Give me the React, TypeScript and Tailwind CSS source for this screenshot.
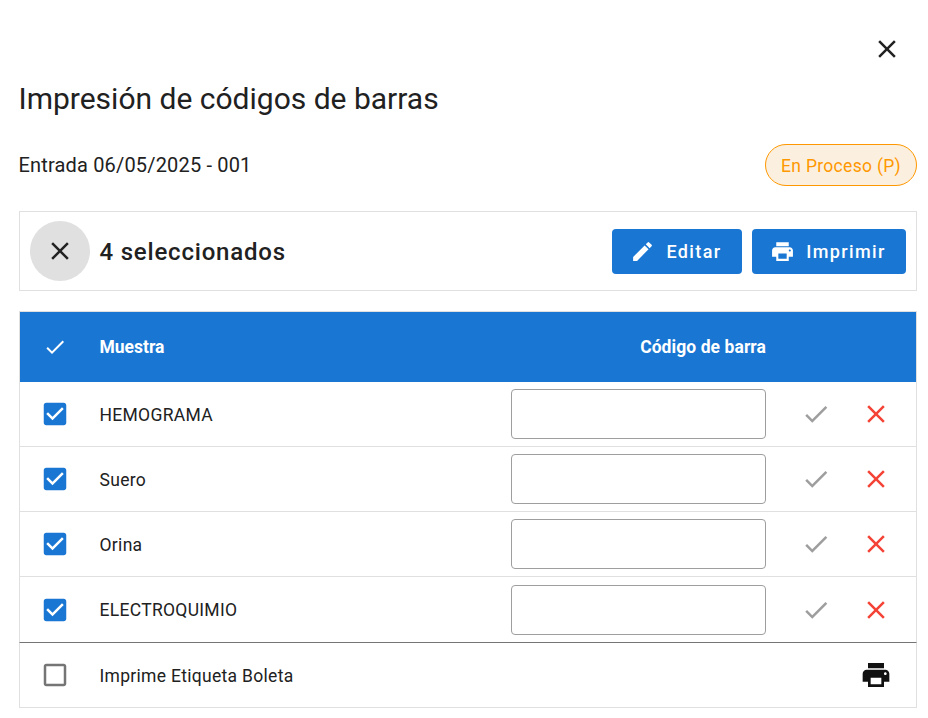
const paths = {
  close: "M19 6.41 17.59 5 12 10.59 6.41 5 5 6.41 10.59 12 5 17.59 6.41 19 12 13.41 17.59 19 19 17.59 13.41 12z",
  check: "M9 16.17 4.83 12l-1.42 1.41L9 19 21 7l-1.41-1.41z",
  edit: "M3 17.25V21h3.75L17.81 9.94l-3.75-3.75L3 17.25zM20.71 7.04a.996.996 0 0 0 0-1.41l-2.34-2.34a.996.996 0 0 0-1.41 0l-1.83 1.83 3.75 3.75 1.83-1.83z",
  print: "M19 8H5c-1.66 0-3 1.34-3 3v6h4v4h12v-4h4v-6c0-1.66-1.34-3-3-3zm-3 11H8v-5h8v5zm3-7c-.55 0-1-.45-1-1s.45-1 1-1 1 .45 1 1-.45 1-1 1zm-1-9H6v4h12V3z",
  checked: "M19 3H5c-1.11 0-2 .9-2 2v14c0 1.1.89 2 2 2h14c1.11 0 2-.9 2-2V5c0-1.1-.89-2-2-2zm-9 14l-5-5 1.41-1.41L10 14.17l7.59-7.59L19 8l-9 9z",
  unchecked: "M19 5v14H5V5h14m0-2H5c-1.1 0-2 .9-2 2v14c0 1.1.9 2 2 2h14c1.1 0 2-.9 2-2V5c0-1.1-.9-2-2-2z",
};

const Icon = ({ d, className }: { d: string; className: string }) => (
  <svg viewBox="0 0 24 24" fill="currentColor" className={className}>
    <path d={d} />
  </svg>
);

const samples = ["HEMOGRAMA", "Suero", "Orina", "ELECTROQUIMIO"];

const App = () => {
  return (
    <div className="h-[718px] w-[928px] overflow-hidden bg-white pt-[29px] pr-[11px] pl-[19px] font-['Roboto',sans-serif] text-[#212121]">
      <div className="flex h-[40px] justify-end pr-[10px]">
        <button className="flex h-[40px] w-[40px] items-center justify-center">
          <Icon d={paths.close} className="h-[30px] w-[30px] shrink-0" />
        </button>
      </div>

      <h1 className="mt-[10px] -ml-[0.5px] h-[40px] text-[30px] leading-[40px] font-normal">Impresión de códigos de barras</h1>

      <div className="mt-[25px] flex h-[42px] items-center justify-between">
        <span className="-ml-[0.5px] text-[20px] tracking-[0.17px]">Entrada 06/05/2025 - 001</span>
        <span className="flex h-[42px] w-[152px] items-center justify-center rounded-[21px] border border-[#ff9800] bg-[#fbf0e0] pt-[2px] text-[17.5px] tracking-[0.3px] text-[#ff9800]">
          En Proceso (P)
        </span>
      </div>

      <div className="mt-[25px] flex h-[80px] items-center border border-[#e0e0e0] px-[10px]">
        <button className="flex h-[60px] w-[60px] items-center justify-center rounded-full bg-[#e0e0e0] pr-px">
          <Icon d={paths.close} className="h-[30px] w-[30px] shrink-0" />
        </button>
        <span className="ml-[9.5px] flex-1 pt-[2px] text-[24px] font-medium tracking-[0.8px]">4 seleccionados</span>
        <button className="flex h-[45px] w-[130px] items-center justify-center gap-[11px] rounded-[4px] bg-[#1976d2] pr-[2px] text-[18px] font-medium tracking-[1.4px] text-white">
          <Icon d={paths.edit} className="h-[25px] w-[25px]" />
          Editar
        </button>
        <button className="ml-[10px] flex h-[45px] w-[154px] items-center justify-center gap-[11px] rounded-[4px] bg-[#1976d2] pr-[2px] text-[18px] font-medium tracking-[1.4px] text-white">
          <Icon d={paths.print} className="h-[25px] w-[25px]" />
          Imprimir
        </button>
      </div>

      <div className="mt-[20px] border-x border-t border-[#e0e0e0]">
        <div className="flex h-[70px] items-center bg-[#1976d2] text-[17.5px] font-bold text-white">
          <span className="flex w-[80px] justify-center pr-[11px]">
            <Icon d={paths.check} className="h-[24px] w-[24px]" />
          </span>
          <span className="w-[411px] -translate-x-[0.5px]">Muestra</span>
          <span className="w-[255px] text-right tracking-[0.07px]">Código de barra</span>
        </div>

        {samples.map((name) => (
          <div key={name} className="flex h-[65px] items-center border-b border-[#e0e0e0] text-[17.5px] tracking-[0.3px] last:border-b-0">
            <span className="flex w-[80px] justify-center pr-[11px] text-[#1976d2]">
              <Icon d={paths.checked} className="h-[30px] w-[30px] shrink-0" />
            </span>
            <span className="w-[411px] -translate-x-[0.5px] pt-[2px]">{name}</span>
            <input className="h-[50px] w-[255px] rounded-[4px] border border-[#9e9e9e] bg-white" />
            <span className="flex w-[100px] justify-center text-[#9e9e9e]">
              <Icon d={paths.check} className="h-[30px] w-[30px] shrink-0" />
            </span>
            <span className="flex w-[20px] justify-center text-[#f44336]">
              <Icon d={paths.close} className="h-[30px] w-[30px] shrink-0" />
            </span>
          </div>
        ))}
      </div>

      <div className="flex h-[66px] items-center border border-[#e0e0e0] border-t-[#757575] text-[17.5px] tracking-[0.3px]">
        <span className="flex w-[80px] justify-center pr-[11px] text-[#757575]">
          <Icon d={paths.unchecked} className="h-[30px] w-[30px] shrink-0" />
        </span>
        <span className="flex-1 -translate-x-[0.5px] pt-[2px]">Imprime Etiqueta Boleta</span>
        <span className="flex w-[80px] justify-center text-[#111111]">
          <Icon d={paths.print} className="h-[32px] w-[32px]" />
        </span>
      </div>
    </div>
  );
};

export default App;
